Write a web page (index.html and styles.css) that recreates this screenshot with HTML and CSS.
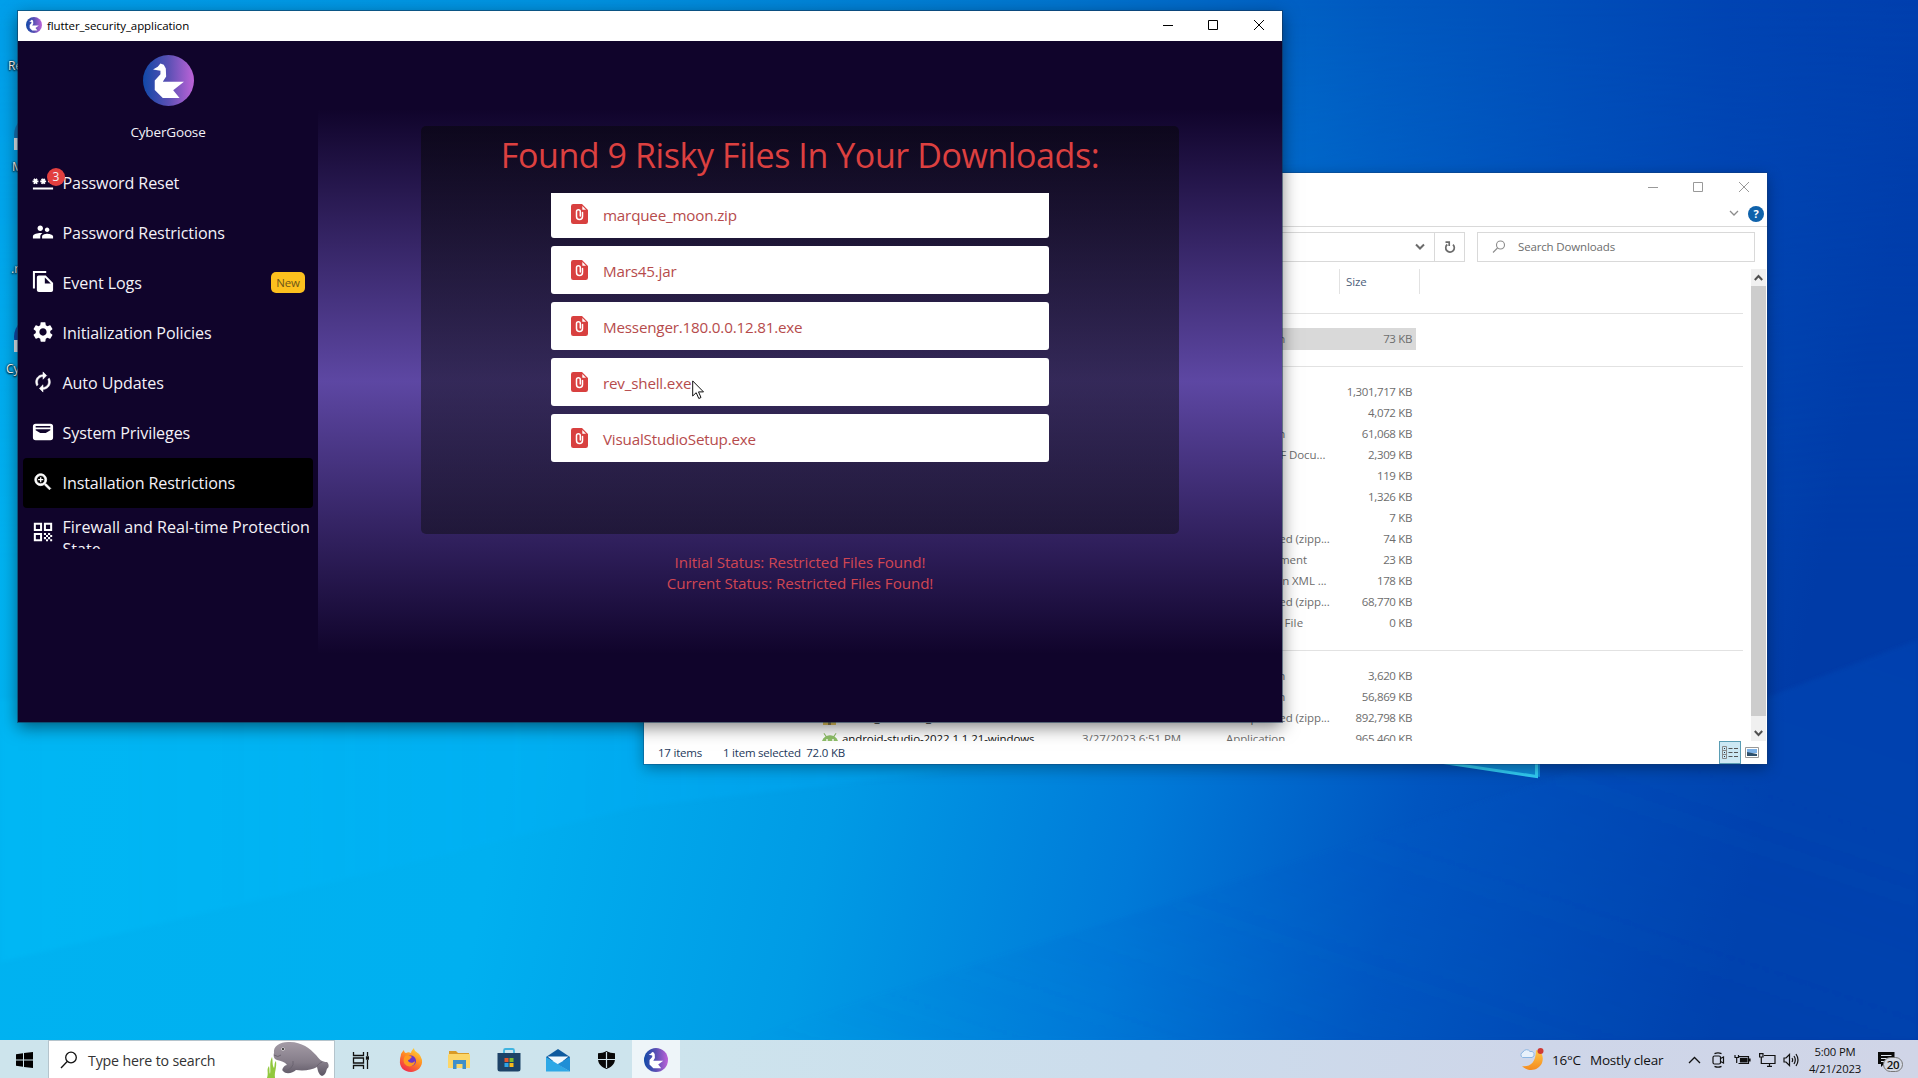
FILE: index.html
```html
<!DOCTYPE html>
<html lang="en">
<head>
<meta charset="utf-8">
<title>Desktop</title>
<link rel="stylesheet" href="styles.css">
</head>
<body>
<svg class="defs" width="0" height="0" aria-hidden="true">
  <defs>
    <linearGradient id="gooseFill" x1="0" y1="0" x2="1" y2="0">
      <stop offset="0" stop-color="#1149a8"/><stop offset=".5" stop-color="#5b50b4"/><stop offset="1" stop-color="#bd63d8"/>
    </linearGradient>
    <symbol id="goose" viewBox="0 0 152 152">
      <circle cx="76" cy="76" r="76" fill="url(#gooseFill)"/>
      <path fill="#fff" d="M30 43 44 35 52 25 62 29 68 40 69 64 59 80 122 80 90 105 109 128H59L35 104V76L52 57V47Z"/>
    </symbol>
    <symbol id="attach" viewBox="0 0 17 20">
      <path fill="#d8403f" d="M2.3 0H11L17 6V17.7A2.3 2.3 0 0 1 14.700 20H2.300A2.300 2.300 0 0 1 0 17.700V2.300A2.300 2.300 0 0 1 2.300 0Z"/>
      <path fill="none" stroke="#fff" stroke-width="1.500" stroke-linecap="round" d="M11.500 8.500V12.500a3 3 0 0 1-6 0V7.600a1.900 1.900 0 0 1 3.800 0V12"/>
      <path fill="#fff" d="M11.300 2V5.700H15Z"/>
    </symbol>
  </defs>
</svg>

<div class="screen">
  <main class="desktop">
    <svg class="wallpaper" viewBox="0 0 1918 1040" preserveAspectRatio="none">
      <defs>
        <linearGradient id="wpTop" x1="0" x2="1" y1="0" y2="0">
          <stop offset="0" stop-color="#009fea"/><stop offset=".3" stop-color="#0092e0"/><stop offset=".55" stop-color="#0075cf"/><stop offset=".72" stop-color="#0059c0"/><stop offset=".9" stop-color="#0044b3"/><stop offset="1" stop-color="#003fae"/>
        </linearGradient>
        <linearGradient id="wpBottom" x1="0" x2="1" y1="0" y2=".12">
          <stop offset="0" stop-color="#00b3f1"/><stop offset=".35" stop-color="#00b0f0"/><stop offset=".52" stop-color="#009be5"/><stop offset=".68" stop-color="#007ad8"/><stop offset=".82" stop-color="#0055c0"/><stop offset="1" stop-color="#003ba7"/>
        </linearGradient>
        <linearGradient id="wpFade" x1="0" x2="0" y1="0" y2="1">
          <stop offset="0" stop-color="#000"/><stop offset=".55" stop-color="#fff"/>
        </linearGradient>
        <linearGradient id="wpBeam" x1="0" x2="1" y1="0" y2="0">
          <stop offset="0" stop-color="#00bdf8" stop-opacity=".45"/><stop offset=".6" stop-color="#00a8f5" stop-opacity=".35"/><stop offset="1" stop-color="#0091ee" stop-opacity="0"/>
        </linearGradient>
        <linearGradient id="wpShade" x1="0" x2="1" y1="1" y2="0">
          <stop offset="0" stop-color="#0069d2" stop-opacity="0"/><stop offset="1" stop-color="#0047b8" stop-opacity=".45"/>
        </linearGradient>
        <mask id="wpMask"><rect width="1918" height="1040" fill="url(#wpFade)"/></mask>
        <filter id="soft"><feGaussianBlur stdDeviation="2"/></filter>
      </defs>
      <rect width="1918" height="1040" fill="url(#wpTop)"/>
      <rect width="1918" height="1040" fill="url(#wpBottom)" mask="url(#wpMask)"/>
      <path fill="url(#wpBeam)" filter="url(#soft)" d="M0 700H1430V768L960 770 640 806 300 890 0 962Z"/>
      <path fill="url(#wpShade)" filter="url(#soft)" d="M740 1040 1540 784 1918 640V1040Z"/>
      <path fill="#119ae0" fill-opacity=".8" d="M1430 760 1540 777V760Z"/>
      <path fill="none" stroke="#31ccf4" stroke-width="3" d="M1440 762 1536.500 776.500V760"/>
    </svg>

    <div class="shortcut s-bin">Re</div>
    <div class="shortcut s-edge"><i></i>M</div>
    <div class="shortcut s-net">.r</div>
    <div class="shortcut s-goose"><i></i>Cy</div>

    <section class="explorer">
      <header class="ex-title">
        <svg class="winbtns" width="102" height="12" viewBox="0 0 102 12" fill="none" stroke="#999"><path d="M0 6.500H10M45.500 1.500H54.500V10.500H45.500ZM91 1 101 11M101 1 91 11"/></svg>
      </header>
      <div class="ex-ribbon">
        <svg width="10" height="7" viewBox="0 0 10 7" fill="none" stroke="#8c8c8c" stroke-width="1.300"><path d="M1 1 5 5 9 1"/></svg>
        <span class="help">?</span>
      </div>
      <div class="ex-bar">
        <div class="address">
          <svg width="10" height="8" viewBox="0 0 10 8" fill="none" stroke="#6b6b6b" stroke-width="2"><path d="M1 1.500 5 5.500 9 1.500"/></svg>
          <span class="refresh"><svg width="12" height="13" viewBox="0 0 12 13" fill="none" stroke="#6b6b6b" stroke-width="1.700"><path d="M9 3.700A4.300 4.300 0 1 1 3.300 3.500M1.500 1.200H5.200V5"/></svg></span>
        </div>
        <div class="ex-search">
          <svg width="14" height="14" viewBox="0 0 14 14" fill="none" stroke="#8c8c8c" stroke-width="1.100"><circle cx="8.500" cy="5" r="4"/><path d="M5.500 8 1 12.500"/></svg>
          <span>Search Downloads</span>
        </div>
      </div>
      <div class="ex-body">
        <div class="list">
          <div class="cols"><span class="size-head">Size</span></div>
          <div class="rule first"></div>
          <div class="row selected"><b></b><span></span><span>Application</span><em>73 KB</em></div>
          <div class="rule"></div>
          <div class="row"><b></b><span></span><span></span><em>1,301,717 KB</em></div>
          <div class="row"><b></b><span></span><span></span><em>4,072 KB</em></div>
          <div class="row"><b></b><span></span><span>Application</span><em>61,068 KB</em></div>
          <div class="row"><b></b><span></span><span>Firefox PDF Docu...</span><em>2,309 KB</em></div>
          <div class="row"><b></b><span></span><span></span><em>119 KB</em></div>
          <div class="row"><b></b><span></span><span></span><em>1,326 KB</em></div>
          <div class="row"><b></b><span></span><span></span><em>7 KB</em></div>
          <div class="row"><b></b><span></span><span>Compressed (zipp...</span><em>74 KB</em></div>
          <div class="row"><b></b><span></span><span>Text Document</span><em>23 KB</em></div>
          <div class="row"><b></b><span></span><span>Office Open XML ...</span><em>178 KB</em></div>
          <div class="row"><b></b><span></span><span>Compressed (zipp...</span><em>68,770 KB</em></div>
          <div class="row"><b></b><span></span><span class="wide">Data Base File</span><em>0 KB</em></div>
          <div class="rule last"></div>
          <div class="row"><b></b><span></span><span>Application</span><em>3,620 KB</em></div>
          <div class="row"><b></b><span></span><span>Application</span><em>56,869 KB</em></div>
          <div class="row"><b><svg width="16" height="16" viewBox="0 0 16 16"><path fill="#e8c55c" d="M1 2H14V15H1Z"/><path fill="#8d7a4c" d="M6 2H9V15H6Z"/></svg>flutter_windows_3.7.8</b><span></span><span>Compressed (zipp...</span><em>892,798 KB</em></div>
          <div class="row"><b><svg width="16" height="16" viewBox="0 0 16 16"><path fill="#8fc069" d="M0 14A8 8 0 0 1 3.500 5.500L1.500 2.500 2.300 2 4.500 4.900A9 9 0 0 1 11.500 4.900L13.700 2 14.500 2.500 12.500 5.500A8 8 0 0 1 16 14Z"/><circle cx="5" cy="9" r=".9" fill="#fff"/><circle cx="11" cy="9" r=".9" fill="#fff"/></svg>android-studio-2022.1.1.21-windows</b><span>3/27/2023 6:51 PM</span><span>Application</span><em>965,460 KB</em></div>
        </div>
        <div class="scroll">
          <svg width="15" height="17" viewBox="0 0 15 17" fill="none" stroke="#505050" stroke-width="2"><path d="M3.800 11 7.500 7 11.200 11"/></svg>
          <i></i>
          <svg width="15" height="25" viewBox="0 0 15 25" fill="none" stroke="#505050" stroke-width="2"><path d="M3.800 15 7.500 19 11.200 15"/></svg>
        </div>
      </div>
      <footer class="ex-status">
        <span>17 items</span><span>1 item selected&nbsp; 72.0 KB</span>
        <span class="view-on"><svg width="17" height="14" viewBox="0 0 17 14" fill="none" stroke="#555"><path stroke="#888" d="M.5.500H4.500V12.500H.5ZM.5 4.500H4.500M.5 8.500H4.500"/><path d="M6.500 2.500H10.500M12 2.500H16M6.500 6.500H10.500M12 6.500H16M6.500 10.500H10.500M12 10.500H16"/><path stroke="#234" d="M2 2.500H3M2 6.500H3M2 10.500H3"/></svg></span>
        <svg class="view-off" width="14" height="12" viewBox="0 0 14 12"><path fill="#fff" stroke="#999" d="M.5.500H13.500V10.500H.5Z"/><path fill="#7db2e8" d="M2 2H12V6H2Z"/><path fill="#2d4f6b" d="M2 5 7 6 12 7V9H2Z"/></svg>
      </footer>
    </section>

    <section class="app">
      <header class="app-title">
        <svg width="16" height="16"><use href="#goose"/></svg>
        <span>flutter_security_application</span>
        <svg class="winbtns" width="102" height="12" viewBox="0 0 102 12" fill="none" stroke="#000"><path d="M0 6.500H10M45.500 1.500H54.500V10.500H45.500ZM91 1 101 11M101 1 91 11"/></svg>
      </header>
      <div class="app-body">
        <aside class="sidebar">
          <svg class="brand-logo" width="51" height="51"><use href="#goose"/></svg>
          <div class="brand">CyberGoose</div>
          <nav class="nav">
            <a><svg viewBox="0 0 24 24"><path d="M1 18H23V20.200H1Z"/><path fill="none" stroke="#fff" stroke-width="1.900" d="M.6 11.300H7M2.200 8.500 5.400 14.100M5.400 8.500 2.200 14.100M9 11.300H15.400M10.600 8.500 13.800 14.100M13.800 8.500 10.600 14.100M17.400 11.300H23.800"/></svg><span>Password Reset</span><b class="count">3</b></a>
            <a><svg viewBox="0 0 24 24"><path d="M16.500 12c1.380 0 2.490-1.120 2.490-2.500S17.880 7 16.500 7 14 8.120 14 9.500s1.120 2.500 2.500 2.500M9 11c1.660 0 2.990-1.340 2.990-3S10.660 5 9 5 6 6.340 6 8s1.340 3 3 3m7.500 3c-1.830 0-5.500.92-5.500 2.750V19h12v-2.250c0-1.830-4.670-2.750-6.500-2.750M9 13c-2.330 0-8 1.170-8 3.500V19h8v-2.250c0-.85.33-2.340 2.370-3.470C10.500 13.100 9.660 13 9 13"/></svg><span>Password Restrictions</span></a>
            <a><svg viewBox="0 0 24 24"><path d="M15.500 0H1V19H3.200V2.200H15.500ZM15 5 23 13V21A2.200 2.200 0 0 1 21 23H7.500A2.200 2.200 0 0 1 5.300 21V7A2 2 0 0 1 7.300 5ZM14 13.500H20.500L14 7Z"/></svg><span>Event Logs</span><b class="new">New</b></a>
            <a><svg viewBox="0 0 24 24"><path transform="translate(-1.200 -1.200) scale(1.100)" d="M19.140 12.940c.04-.3.060-.61.060-.94 0-.32-.02-.64-.07-.94l2.030-1.580c.18-.14.230-.41.120-.61l-1.920-3.320c-.12-.22-.37-.29-.59-.22l-2.390.96c-.5-.38-1.030-.7-1.620-.94l-.36-2.540c-.04-.24-.24-.41-.48-.41h-3.840c-.24 0-.43.170-.47.410l-.36 2.540c-.59.240-1.130.57-1.620.94l-2.390-.96c-.22-.08-.47 0-.59.220L2.740 8.870c-.12.210-.08.470.12.610l2.030 1.580c-.05.3-.09.630-.09.940s.02.640.07.940l-2.030 1.580c-.18.140-.23.410-.12.610l1.920 3.320c.12.220.37.290.59.220l2.390-.96c.5.380 1.030.7 1.620.94l.36 2.540c.05.240.24.410.48.410h3.840c.24 0 .44-.17.470-.41l.36-2.540c.59-.24 1.130-.56 1.620-.94l2.390.96c.22.080.47 0 .59-.22l1.920-3.320c.12-.22.070-.47-.12-.61zM12 15.600c-1.980 0-3.600-1.620-3.600-3.600s1.620-3.600 3.600-3.600 3.600 1.620 3.600 3.600-1.620 3.600-3.600 3.600"/></svg><span>Initialization Policies</span></a>
            <a><svg viewBox="0 0 24 24"><path stroke="#fff" stroke-width=".6" d="M12 6v3l4-4-4-4v3c-4.420 0-8 3.580-8 8 0 1.570.46 3.030 1.240 4.260L6.700 14.800c-.45-.83-.7-1.790-.7-2.800 0-3.310 2.690-6 6-6m6.760 1.740L17.300 9.200c.44.840.7 1.790.7 2.800 0 3.310-2.690 6-6 6v-3l-4 4 4 4v-3c4.420 0 8-3.580 8-8 0-1.570-.46-3.030-1.240-4.260"/></svg><span>Auto Updates</span></a>
            <a><svg viewBox="0 0 24 24"><path fill-rule="evenodd" d="M4 3H20A3 3 0 0 1 23 6V18A3 3 0 0 1 20 21H4A3 3 0 0 1 1 18V6A3 3 0 0 1 4 3ZM4 5.500V7H20V5.500ZM4 10 9 13H15L20 10V9H4Z"/></svg><span>System Privileges</span></a>
            <a class="active"><svg viewBox="0 0 24 24"><path stroke="#fff" stroke-width=".8" d="M15.500 14h-.79l-.28-.27C15.410 12.590 16 11.110 16 9.500 16 5.910 13.090 3 9.500 3S3 5.910 3 9.500 5.910 16 9.500 16c1.610 0 3.090-.59 4.230-1.570l.27.280v.79l5 4.990L20.490 19zm-6 0C7.010 14 5 11.990 5 9.500S7.010 5 9.500 5 14 7.010 14 9.500 11.990 14 9.500 14"/><path d="M12.300 10.200H10.200V12.300H8.800V10.200H6.700V8.800H8.800V6.700H10.200V8.800H12.300Z"/></svg><span>Installation Restrictions</span></a>
            <a class="two-line"><svg viewBox="0 0 24 24"><path fill-rule="evenodd" d="M2 2H11V11H2ZM4.200 4.200V8.800H8.800V4.200ZM13 2H22V11H13ZM15.200 4.200V8.800H19.800V4.200ZM2 13H11V22H2ZM4.200 15.200V19.800H8.800V15.200Z"/><path d="M13 13H15.300V15.300H13ZM17.500 13H19.800V15.300H17.500ZM15.300 15.300H17.500V17.500H15.300ZM19.800 15.300H22V17.500H19.800ZM13 17.500H15.300V19.800H13ZM17.500 17.500H19.800V19.800H17.500ZM15.300 19.800H17.500V22H15.300ZM19.800 19.800H22V22H19.800Z"/></svg><span>Firewall and Real-time Protection State</span></a>
          </nav>
        </aside>
        <div class="content">
          <div class="card">
            <h1>Found 9 Risky Files In Your Downloads:</h1>
            <ul class="files">
              <li><svg width="17" height="20"><use href="#attach"/></svg><span>marquee_moon.zip</span></li>
              <li><svg width="17" height="20"><use href="#attach"/></svg><span>Mars45.jar</span></li>
              <li><svg width="17" height="20"><use href="#attach"/></svg><span>Messenger.180.0.0.12.81.exe</span></li>
              <li><svg width="17" height="20"><use href="#attach"/></svg><span>rev_shell.exe</span></li>
              <li><svg width="17" height="20"><use href="#attach"/></svg><span>VisualStudioSetup.exe</span></li>
            </ul>
          </div>
          <p class="status">Initial Status: Restricted Files Found!<br>Current Status: Restricted Files Found!</p>
        </div>
      </div>
    </section>

    <svg class="cursor" width="13" height="20" viewBox="0 0 13 20"><path fill="#fff" stroke="#111" d="M.7.900V16L4.200 12.700 6.800 18.500 9 17.500 6.500 11.900H11.500Z"/></svg>
  </main>

  <footer class="taskbar">
    <div class="start"><svg width="17" height="16" viewBox="0 0 17 16"><path d="M0 2.300 7 1.300V7.500H0ZM8 1.100 17 0V7.500H8ZM0 8.500H7V14.700L0 13.700ZM8 8.500H17V16L8 14.900Z"/></svg></div>
    <div class="tb-search">
      <svg width="18" height="18" viewBox="0 0 18 18" fill="none" stroke="#111" stroke-width="1.300"><circle cx="11" cy="6.500" r="5.300"/><path d="M7.200 10.500 1 17"/></svg>
      <span>Type here to search</span>
      <svg class="manatee" width="64" height="37" viewBox="0 0 64 37">
        <defs><linearGradient id="mt" x1="0" x2="0" y1="0" y2="1"><stop offset="0" stop-color="#a49ba6"/><stop offset=".6" stop-color="#857d89"/><stop offset="1" stop-color="#5c5563"/></linearGradient></defs>
        <path fill="#92c83e" d="M1 37C3 31 0 29 3 25 4 29 3 31 4 33 5 27 3 22 6 16 7 20 6 24 8 27 9 25 8 22 10 20 11 27 8 31 9 37Z"/>
        <path fill="url(#mt)" d="M8 12C7 5 14 1 22 1 34 0 44 7 50 14 54 19 56 21 61 21 64 24 62 27 62 27 60 27 61 34 56 35 52 33 52 29 51 26 46 29 38 30 30 29 27 32 20 34 17 30 15 29 18 24 21 24 19 21 15 20 11 19 8 18 7 15 8 12Z"/>
        <path fill="none" stroke="#6b6470" d="M17 29Q21 31 25 27 28 24 27 20M8 14Q12 17 15 14M51 25Q53 22 56 21"/>
        <circle cx="17" cy="8" r="1.600" fill="#fff"/><circle cx="17" cy="8" r="1" fill="#111"/>
      </svg>
    </div>
    <div class="pins">
      <div><svg width="17" height="17" viewBox="0 0 17 17" fill="none" stroke="#111" stroke-width="1.300"><path d="M1.500 0V3.500H11.500V0M1.500 17V13.500H11.500V17M1.500 6H11.500V11H1.500ZM15.500 0V4M15.500 8V17"/><path fill="#111" d="M14.500 5H16.500V7H14.500Z"/></svg></div>
      <div><svg width="24" height="24" viewBox="0 0 24 24"><defs><linearGradient id="ff" x1=".8" x2=".2" y1="0" y2="1"><stop offset="0" stop-color="#ffd93b"/><stop offset=".45" stop-color="#ff8a23"/><stop offset="1" stop-color="#f0244f"/></linearGradient></defs><path fill="url(#ff)" d="M2 6C3 4 4 3 5 2 5 4 6 5 7 5 9 4 10 4 12 5 12 3 14 1 15 0 15 3 18 4 20 6 21 7 22 9 23 12 24 19 18 24 12 24 5 24 0 19 1 12 1 9 2 8 2 6Z"/><path fill="#6a35c9" d="M8 9C11 6 17 8 17 13 17 17 13 19 10 17 7 16 6 12 8 9Z"/><path fill="#ff9a20" d="M6 8C9 6 12 8 13 9 11 10 11 12 9 12 9 15 14 16 16 13 16 18 10 20 7 17 4 15 4 11 6 8Z"/></svg></div>
      <div><svg width="23" height="20" viewBox="0 0 23 20"><path fill="#d99b26" d="M1 1H8L10 3H21V7H1Z"/><path fill="#fcd668" d="M1 4H21A1 1 0 0 1 22 5V18H0V5Z"/><path fill="#3f8fc9" d="M5 10H18V19H14.500V14H8.500V19H5Z"/></svg></div>
      <div><svg width="24" height="24" viewBox="0 0 24 24"><path fill="none" stroke="#3fb4e0" stroke-width="1.800" d="M7 6V2.500A1.500 1.500 0 0 1 8.500 1H15.500A1.500 1.500 0 0 1 17 2.500V6"/><path fill="#1d4267" d="M.5 5H23.500V21A2.500 2.500 0 0 1 21 23.500H3A2.500 2.500 0 0 1 .5 21Z"/><path fill="#e5552d" d="M7.500 10H11.500V14H7.500Z"/><path fill="#7fba2c" d="M12.500 10H16.500V14H12.500Z"/><path fill="#2fa3e6" d="M7.500 15H11.500V19H7.500Z"/><path fill="#fbb81b" d="M12.500 15H16.500V19H12.500Z"/></svg></div>
      <div><svg width="24" height="23" viewBox="0 0 24 23"><path fill="#0f5a9e" d="M0 8 12 0 24 8V12H0Z"/><path fill="#f2f9fe" d="M1.500 7.500H22.500L12 16Z"/><path fill="#2ea8e6" d="M0 8 24 22.500H0Z"/><path fill="#1f8fd6" d="M24 8V22.500L11.500 15.300Z"/></svg></div>
      <div><svg width="17" height="18" viewBox="0 0 17 18"><path fill="#080808" d="M8.500 0C11 1.700 14 2.200 17 2.200V8C17 13 13 16.500 8.500 18 4 16.500 0 13 0 8V2.200C3 2.200 6 1.700 8.500 0Z"/><path stroke="#cfe2ea" stroke-width="1.200" d="M8.500 1V17M0 8.500H17"/></svg></div>
      <div class="current"><svg width="24" height="24"><use href="#goose"/></svg></div>
    </div>
    <div class="tray">
      <svg width="26" height="24" viewBox="0 0 26 24"><defs><linearGradient id="mn" x1="0" x2="0" y1="0" y2="1"><stop offset="0" stop-color="#ffc847"/><stop offset="1" stop-color="#f58a1e"/></linearGradient></defs><path fill="url(#mn)" d="M17 2C23 3 25 9 23 15 20 22 10 25 3 18 10 19 17 16 17 2Z"/><path fill="#e8f1fb" stroke="#8bb6e2" d="M3.500 9.500A3 3 0 0 1 4 4 4 4 0 0 1 11 3.500 3 3 0 0 1 13 9.500Z"/><circle cx="21.500" cy="3" r="3" fill="#cf3a34"/></svg>
      <span class="temp">16°C</span><span class="wx">Mostly clear</span>
      <svg class="t-up" width="13" height="8" viewBox="0 0 13 8" fill="none" stroke="#111" stroke-width="1.300"><path d="M1 7 6.500 1.500 12 7"/></svg>
      <svg class="t-cam" width="13" height="16" viewBox="0 0 13 16" fill="none" stroke="#111" stroke-width="1.200"><rect x="1" y="4" width="7.500" height="8" rx="1.500"/><path d="M8.500 6.500 11.500 5V11L8.500 9.500M2.500 1.600Q6 0 9.500 1.600M2.500 14.400Q6 16 9.500 14.400"/></svg>
      <svg class="t-bat" width="17" height="12" viewBox="0 0 17 12" fill="none" stroke="#111" stroke-width="1.200"><path d="M5 2.600H14.500V9.500H4.500"/><path fill="#111" d="M6.500 4.500H13V8H6.500ZM15 5H16V7H15Z"/><path d="M1 1V3.500H4.500V1M2.700 4V9"/></svg>
      <svg class="t-net" width="17" height="14" viewBox="0 0 17 14" fill="none" stroke="#111" stroke-width="1.200"><path d="M5 2.500H16V10.500H4.500M8 13.400H13M10.500 10.500V13M.6.600H4V4H.6ZM2.300 4V10.500H5"/></svg>
      <svg class="t-snd" width="17" height="14" viewBox="0 0 17 14" fill="none" stroke="#111" stroke-width="1.200"><path d="M1 5H3L6.500 1.500V12.500L3 9H1ZM9 5Q10.300 7 9 9M11 3Q13.600 7 11 11M13 1Q17 7 13 13"/></svg>
      <div class="clock">5:00 PM<br>4/21/2023</div>
      <div class="notes"><svg width="17" height="16" viewBox="0 0 17 16"><path fill="#0a0a0a" d="M0 0H16.500V12H6L3 15V12H0Z"/><path stroke="#dfe5ef" d="M3 3.500H13.500M3 6.500H13.500M3 9.500H9"/></svg><span>20</span></div>
    </div>
  </footer>
</div>
</body>
</html>
```
FILE: styles.css
```css
* { box-sizing: border-box; }
body { margin: 0; font-family: "Open Sans", "Noto Sans", sans-serif; }
.defs { position: absolute; }
svg { display: block; flex: none; }

.screen { width: 1918px; height: 1078px; display: flex; flex-direction: column; overflow: hidden; }
.desktop { position: relative; flex: 1; overflow: hidden; }
.wallpaper { position: absolute; inset: 0; width: 100%; height: 100%; }

/* Desktop shortcuts, mostly hidden by the app window */
.shortcut { position: absolute; width: 60px; color: #fff; font-size: 12px; line-height: 16px; text-shadow: 0 1px 2px #000, 0 0 2px #000; white-space: nowrap; }
.shortcut i { position: absolute; left: 2px; top: -45px; width: 42px; height: 42px; border-radius: 50%; background: #1673b5; }
.s-bin { left: 8px; top: 58px; }
.s-edge { left: 12px; top: 159px; }
.s-net { left: 11px; top: 261px; }
.s-goose { left: 6px; top: 361px; }
.s-goose i { left: 8px; background: #1149a8; }
.s-goose i::after, .s-edge i::after { content: ""; position: absolute; left: 0; top: 24px; width: 10px; height: 12px; background: #dfe6ee; }

/* File explorer */
.explorer { position: absolute; left: 644px; top: 173px; width: 1123px; height: 591px; display: flex; flex-direction: column; background: #fff; color: #6d6d6d; font-size: 11.500px; letter-spacing: -.15px; box-shadow: 0 0 0 1px rgba(20,60,110,.35), 0 4px 14px rgba(0,0,0,.35); }
.ex-title { height: 28px; display: flex; justify-content: flex-end; align-items: center; padding-right: 17px; }
.ex-ribbon { height: 26px; display: flex; justify-content: flex-end; align-items: center; gap: 9px; padding: 0 3px 0 0; border-bottom: 1px solid #d9d9d9; }
.help { width: 16px; height: 16px; border-radius: 50%; background: #0f62ab; color: #fff; font-weight: 700; font-size: 11px; line-height: 16px; text-align: center; }
.ex-bar { height: 42px; display: flex; justify-content: flex-end; align-items: flex-start; gap: 12px; padding: 5px 12px 0 0; }
.address { width: 800px; height: 30px; display: flex; justify-content: flex-end; align-items: center; gap: 9px; border: 1px solid #d9d9d9; }
.refresh { width: 30px; height: 28px; display: flex; align-items: center; justify-content: center; border-left: 1px solid #d9d9d9; }
.ex-search { width: 278px; height: 30px; display: flex; align-items: center; gap: 12px; padding-left: 14px; border: 1px solid #d9d9d9; }
.ex-search span { padding-bottom: 2px; }
.ex-body { flex: 1; display: flex; justify-content: space-between; min-height: 0; overflow: hidden; }
.list { width: 1099px; overflow: hidden; }
.cols { width: 776px; height: 25px; display: flex; justify-content: flex-end; border-right: 1px solid #e2e2e2; }
.size-head { width: 80px; padding-left: 6px; border-left: 1px solid #e2e2e2; line-height: 26px; color: #4c607a; }
.rule { height: 31px; padding-top: 16px; }
.rule::before { content: ""; display: block; height: 1px; background: #e2e2e2; }
.rule.first { height: 34px; padding-top: 19px; }
.rule.last { height: 32px; padding-top: 17px; }
.row { width: 772px; height: 21px; display: grid; grid-template-columns: 438px 144px 110px 76px; align-items: center; line-height: 21px; white-space: nowrap; }
.row.selected { height: 22px; padding-bottom: 2px; background: #d9d9d9; }
.row b { display: flex; align-items: center; gap: 4px; padding-left: 178px; font-weight: 400; color: #111; letter-spacing: -.09px; }
.row span { letter-spacing: -.08px; }
.row .wide { letter-spacing: .15px; }
.row em { font-style: normal; text-align: right; letter-spacing: -.35px; }
.scroll { width: 15px; margin-right: 1px; display: flex; flex-direction: column; background: #f0f0f0; }
.scroll i { flex: 1; background: #cdcdcd; }
.ex-status { height: 23px; display: flex; align-items: center; padding: 0 8px 0 14px; color: #1e395b; letter-spacing: -.22px; }
.ex-status span:nth-child(2) { margin-left: 21px; flex: 1; }
.view-on { width: 22px; height: 23px; display: flex; align-items: center; justify-content: center; background: #cce8f4; border: 1px solid #5a9db4; }
.view-off { margin-left: 4px; }

/* Security application */
.app { position: absolute; left: 18px; top: 11px; width: 1264px; height: 711px; display: flex; flex-direction: column; background: #10042b; box-shadow: 0 0 0 1px rgba(20,50,80,.55), 0 5px 16px rgba(0,0,0,.5); }
.app-title { height: 30px; display: flex; align-items: center; gap: 5px; padding: 0 17px 2px 8px; background: #fff; color: #000; font-size: 11.500px; letter-spacing: -.08px; }
.app-title .winbtns { margin-left: auto; }
.app-body { flex: 1; display: flex; min-height: 0; }
.sidebar { width: 300px; padding-top: 14px; display: flex; flex-direction: column; align-items: center; color: #f4f2f8; }
.brand { margin-top: 15px; height: 22px; line-height: 22px; font-size: 13.500px; letter-spacing: -.15px; }
.nav { width: 290px; height: 391px; margin-top: 15px; overflow: hidden; }
.nav a { position: relative; height: 50px; display: flex; align-items: center; gap: 8.500px; padding-left: 9px; border-radius: 4px; font-size: 16.100px; letter-spacing: -.1px; line-height: 22px; white-space: nowrap; }
.nav a svg { width: 22px; height: 22px; fill: #fff; margin-top: -2px; }
.nav a.active { background: #000; }
.nav a.two-line { letter-spacing: 0; white-space: normal; align-items: flex-start; }
.two-line span { margin-top: 8px; width: 250px; flex: none; }
.nav a.two-line svg { margin-top: 13px; }
.count { position: absolute; left: 24px; top: 10px; width: 18px; height: 18px; border-radius: 50%; background: #e23f3f; font-weight: 400; font-size: 12px; line-height: 18px; text-align: center; }
.new { margin: -2px 8px 0 auto; width: 34px; height: 21px; border-radius: 5px; background: #fcc01e; color: #6e5718; font-weight: 400; font-size: 11.500px; line-height: 22px; text-align: center; }

.content { flex: 1; display: flex; flex-direction: column; align-items: center; padding-top: 85px; background: linear-gradient(#10042b 10%, #5d47a3 50%, #10042b 90%); }
.card { width: 758px; height: 408px; padding-top: 5px; display: flex; flex-direction: column; align-items: center; background: linear-gradient(rgba(6,6,8,.52), rgba(12,12,14,.47)); border-radius: 5px; }
h1 { margin: 0; height: 62px; line-height: 49px; font-weight: 400; font-size: 34px; letter-spacing: -.42px; color: #dc4040; white-space: nowrap; }
.files { list-style: none; margin: 0; padding: 0; width: 498px; height: 300px; overflow: hidden; display: flex; flex-direction: column; gap: 8px; }
.files li { flex: none; height: 48px; display: flex; align-items: center; gap: 15px; padding-left: 20px; background: #fff; border-radius: 3px; color: #b64b4c; font-size: 15.200px; letter-spacing: -.19px; }
.files li:first-child { margin-top: -3px; }
.files span { padding-top: 1px; }
.status { margin: 18px 0 0; text-align: center; color: #d04653; font-size: 15.200px; line-height: 21px; letter-spacing: -.08px; }
.cursor { position: absolute; left: 692px; top: 380px; }

/* Taskbar */
.taskbar { height: 38px; display: flex; background: linear-gradient(90deg, #cde4ec 0, #cde4ed 35%, #ccdcec 60%, #ced6e9 80%, #d0d5e7 100%); color: #111; }
.start { width: 48px; padding-top: 2px; display: flex; align-items: center; justify-content: center; }
.tb-search { width: 287px; display: flex; align-items: center; padding-left: 11px; background: #fff; border: 1px solid #b5c4cc; border-bottom: 0; font-size: 14.200px; letter-spacing: -.17px; color: #333; }
.tb-search span { margin-left: 10px; padding-top: 1px; flex: 1; white-space: nowrap; }
.manatee { margin-right: 4px; }
.pins { display: flex; padding-left: 1px; }
.pins > div { width: 49px; padding-top: 2px; display: flex; align-items: center; justify-content: center; }
.pins > div:first-child { width: 50px; padding-right: 2px; }
.pins .current { width: 48px; margin-left: 1px; background: #eef5f9; }
.tray { margin-left: auto; padding-top: 2px; display: flex; align-items: center; font-size: 13.500px; letter-spacing: -.2px; }
.temp { margin-left: 7px; width: 38px; }
.wx { width: 98px; white-space: nowrap; }
.t-cam { margin-left: 11px; }
.t-bat { margin-left: 9px; }
.t-net { margin-left: 8px; }
.t-snd { margin-left: 7px; }
.clock { width: 70px; text-align: center; font-size: 11.300px; line-height: 17.500px; letter-spacing: -.15px; }
.notes { position: relative; width: 40px; height: 16px; margin-left: 8px; }
.notes span { position: absolute; left: 5px; top: 5px; width: 20px; height: 15px; border: 1px solid #777; border-radius: 8px; background: #d5dae6; font-weight: 600; font-size: 11.500px; line-height: 13px; letter-spacing: -.3px; text-align: center; }
```
